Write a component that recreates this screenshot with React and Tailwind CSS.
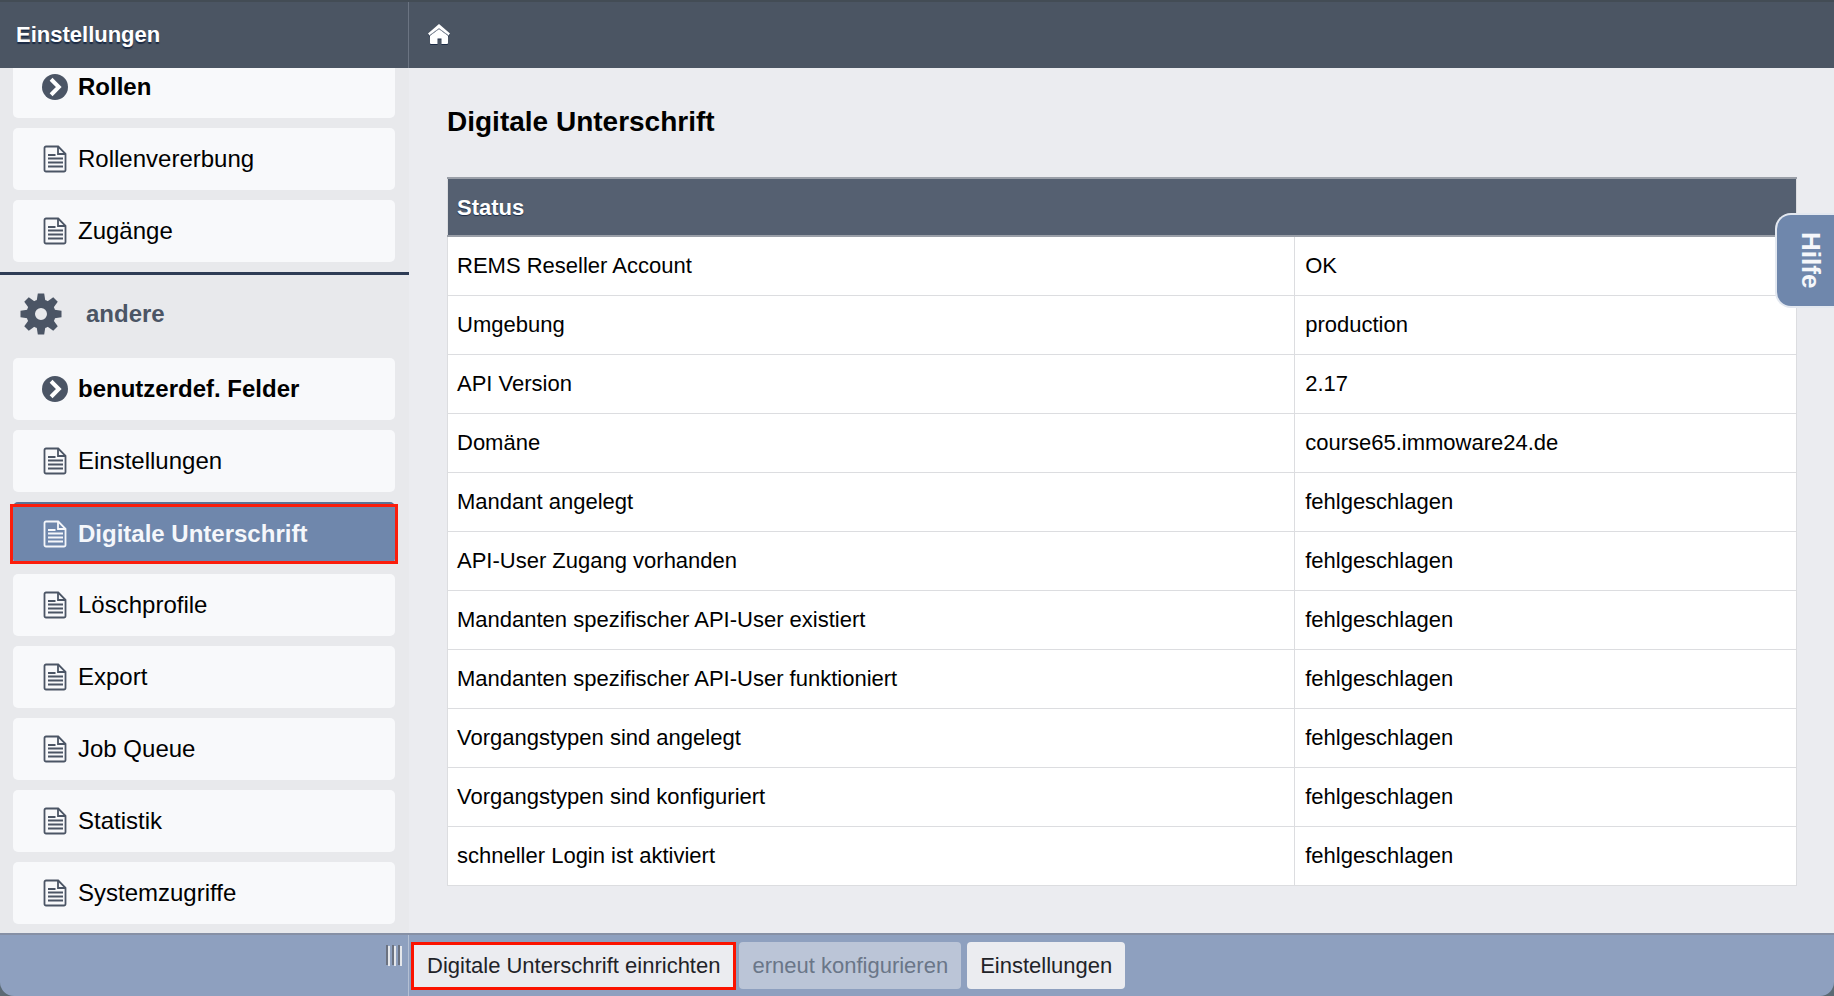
const roleItems = [
  { label: "Rollen", kind: "group" },
  { label: "Rollenvererbung", kind: "page" },
  { label: "Zugänge", kind: "page" },
];

const otherItems = [
  { label: "benutzerdef. Felder", kind: "group" },
  { label: "Einstellungen", kind: "page" },
  { label: "Digitale Unterschrift", kind: "page", active: true },
  { label: "Löschprofile", kind: "page" },
  { label: "Export", kind: "page" },
  { label: "Job Queue", kind: "page" },
  { label: "Statistik", kind: "page" },
  { label: "Systemzugriffe", kind: "page" },
];

const statusRows = [
  ["REMS Reseller Account", "OK"],
  ["Umgebung", "production"],
  ["API Version", "2.17"],
  ["Domäne", "course65.immoware24.de"],
  ["Mandant angelegt", "fehlgeschlagen"],
  ["API-User Zugang vorhanden", "fehlgeschlagen"],
  ["Mandanten spezifischer API-User existiert", "fehlgeschlagen"],
  ["Mandanten spezifischer API-User funktioniert", "fehlgeschlagen"],
  ["Vorgangstypen sind angelegt", "fehlgeschlagen"],
  ["Vorgangstypen sind konfiguriert", "fehlgeschlagen"],
  ["schneller Login ist aktiviert", "fehlgeschlagen"],
];

function HomeIcon() {
  return (
    <svg width="22" height="20" viewBox="0 0 22 20" aria-hidden="true">
      <path d="M0 9.500 11 0l11 9.500-1.500 2-9.500-7-9.500 7z" fill="#fff" />
      <path d="M2 11.800 11 5l9 6.800V19a1 1 0 0 1-1 1h-5.500v-5.500h-4V20H3a1 1 0 0 1-1-1z" fill="#fff" />
      <path d="M1.500 11.600 11 4.600l9.500 7" fill="none" stroke="#8d95a2" strokeWidth="0.900" />
    </svg>
  );
}

function PageIcon() {
  return (
    <svg width="24" height="28" viewBox="0 0 24 28" fill="none" stroke="currentColor" aria-hidden="true">
      <path d="M3 1.500h12.200L22.500 8.800V25a1.500 1.500 0 0 1-1.500 1.500H3A1.500 1.500 0 0 1 1.500 25V3A1.500 1.500 0 0 1 3 1.500z" strokeWidth="1.800" />
      <path d="M15 1.500V9h7.500" strokeWidth="1.800" />
      <path d="M5 10h7.500M5 13.500h15M5 17.500h15M5 21.500h15" strokeWidth="1.800" />
    </svg>
  );
}

function GroupIcon() {
  return (
    <svg width="26" height="26" viewBox="0 0 26 26" aria-hidden="true">
      <circle cx="13" cy="13" r="13" fill="#4b5565" />
      <path d="m10.500 6.700 6.300 6.300-6.300 6.300" fill="none" stroke="#fff" strokeWidth="4" strokeLinecap="square" />
    </svg>
  );
}

function GearIcon() {
  const teeth = [0, 45, 90, 135, 180, 225, 270, 315];
  return (
    <svg width="42" height="42" viewBox="-21 -21 42 42" aria-hidden="true">
      <g fill="#4b5565">
        {teeth.map((angle) => (
          <path key={angle} d="M-4.500-12-3.200-20.500h6.400L4.500-12z" transform={`rotate(${angle})`} />
        ))}
      </g>
      <circle r="10.300" fill="none" stroke="#4b5565" strokeWidth="8.600" />
    </svg>
  );
}

function NavList({ items }) {
  return (
    <ul className="flex shrink-0 flex-col gap-[10px] pr-[14px] pl-[13px]">
      {items.map(({ label, kind, active }) => (
        <li key={label}>
          <a
            href="#"
            aria-current={active ? "page" : undefined}
            className={
              active
                ? "relative flex h-[62px] items-center gap-[10px] rounded-[5px] border-t-2 border-[#5c7396] bg-[#6f87ac] pl-[29px] text-2xl font-bold text-[#f5f7fb] after:absolute after:-inset-x-[3px] after:inset-y-0 after:border-3 after:border-[#fb1d0b]"
                : "flex h-[62px] items-center gap-[10px] rounded-[5px] bg-[#f8f9fb] pl-[29px] text-2xl text-black"
            }
          >
            <span className={active ? "flex w-[26px] justify-center" : "flex w-[26px] justify-center text-[#4b5565]"}>
              {kind === "group" ? <GroupIcon /> : <PageIcon />}
            </span>
            <span className={kind === "group" ? "font-bold" : ""}>{label}</span>
          </a>
        </li>
      ))}
    </ul>
  );
}

export default function App() {
  return (
    <div className="flex h-screen flex-col bg-[#5b6a74] font-['Liberation_Sans',Arial,sans-serif] text-black">
      <header className="flex h-[68px] shrink-0 border-t-2 border-[#434c55] bg-[#4b5563]">
        <div className="flex w-[409px] items-center border-r border-[#6b7482] pb-[2px] pl-4 text-[22px] font-bold text-white [text-shadow:0_2px_1px_#1c2b45]">
          Einstellungen
        </div>
        <a href="#" aria-label="Startseite" className="flex items-center pb-[2px] pl-[19px] drop-shadow-[0_1px_0_#1c2b45]">
          <HomeIcon />
        </a>
      </header>

      <div className="flex min-h-0 flex-1">
        <nav aria-label="Einstellungen" className="flex w-[409px] shrink-0 flex-col justify-end overflow-hidden bg-[#e8e9ec] pb-[9px]">
          <NavList items={roleItems} />
          <h2 className="mt-[10px] flex h-[86px] shrink-0 items-center gap-6 border-t-3 border-[#2e3c55] pb-[6px] pl-5 text-2xl font-bold text-[#4b5565]">
            <GearIcon />
            andere
          </h2>
          <NavList items={otherItems} />
        </nav>

        <main className="relative min-w-0 flex-1 bg-[#ebecf0] pr-[37px] pl-[38px]">
          <h1 className="pt-9 text-[28px] leading-[36px] font-bold">Digitale Unterschrift</h1>
          <table className="mt-[37px] w-full table-fixed border-collapse border border-[#dcdde0] bg-white text-left text-[22px]">
            <colgroup>
              <col className="w-[62.8%]" />
              <col />
            </colgroup>
            <thead>
              <tr className="h-[58px] border-y-2 border-[#9a9fa8] bg-[#556071] text-white">
                <th colSpan={2} scope="colgroup" className="px-[9px] font-bold [text-shadow:0_1px_1px_#1c2b45]">
                  Status
                </th>
              </tr>
            </thead>
            <tbody>
              {statusRows.map(([name, value]) => (
                <tr key={name} className="h-[59px] border-b border-[#dcdde0]">
                  <td className="border-r border-[#dcdde0] px-[9px]">{name}</td>
                  <td className="px-[10px]">{value}</td>
                </tr>
              ))}
            </tbody>
          </table>
          <button
            type="button"
            className="absolute top-[145px] right-0 flex h-[95px] w-[59px] items-center justify-center rounded-l-[16px] border-2 border-r-0 border-[#e3e8f0] bg-[#6f87ac] pl-[10px] text-[26px] font-bold text-[#f5f7fb] [writing-mode:vertical-rl]"
          >
            Hilfe
          </button>
        </main>
      </div>

      <footer className="flex h-[63px] shrink-0 overflow-hidden rounded-b-[14px] border-t-2 border-[#8690a5] bg-[#8ea0bf]">
        <div className="flex w-[409px] justify-end gap-1 border-r border-[#b4c0d4] pt-[10px] pr-[8px]">
          {[0, 1, 2].map((bar) => (
            <span key={bar} className="h-5 w-[2px] bg-[#6b7280] shadow-[2px_1px_0_#e5e7eb]" />
          ))}
        </div>
        <div className="flex items-center gap-[6px] pl-[5px]">
          <button type="button" className="h-[42px] bg-[#ebecf0] px-[13px] text-[22px] text-[#1f2328] outline-3 outline-[#fb1300]">
            Digitale Unterschrift einrichten
          </button>
          <button type="button" disabled className="h-[47px] rounded-[4px] bg-[#bbc5d7] px-[13px] text-[22px] text-[#6a7688]">
            erneut konfigurieren
          </button>
          <button type="button" className="h-[47px] rounded-[4px] bg-[#ebecf0] px-[13px] text-[22px] text-[#1f2328]">
            Einstellungen
          </button>
        </div>
      </footer>
    </div>
  );
}
